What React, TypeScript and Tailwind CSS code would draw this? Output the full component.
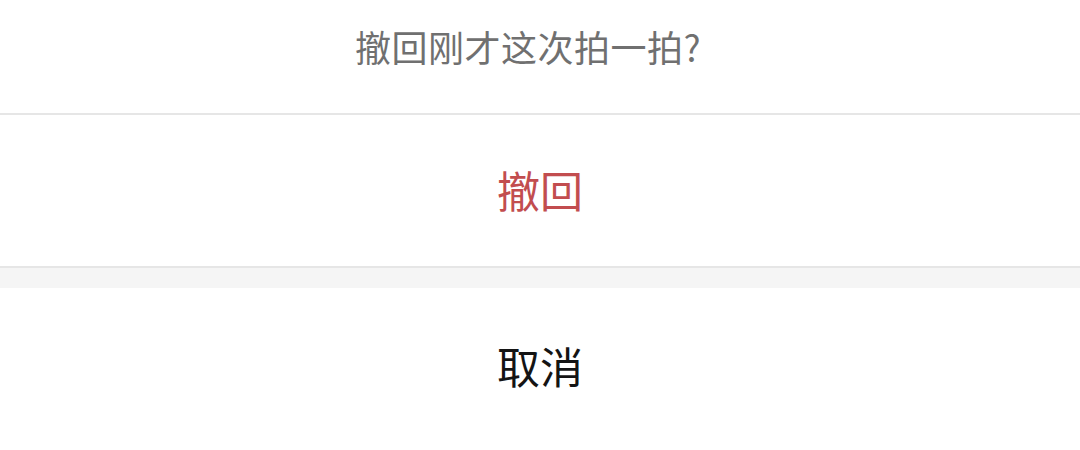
import React from 'react';

const font = { fontFamily: '"Noto Sans CJK SC", "Noto Sans", sans-serif' };

export default function App() {
    return (
        <div className="w-[1080px] h-[450px] bg-white overflow-hidden flex flex-col" style={font}>
            {/* title */}
            <div className="h-[115px] shrink-0 flex items-start justify-center pt-[20px] pr-[24px] border-b-2 border-[#e6e6e6]">
                <span className="text-[36px] leading-[52px] text-[#707070] tracking-[0.5px]">撤回刚才这次拍一拍?</span>
            </div>

            {/* undo action */}
            <button className="h-[151px] shrink-0 flex items-center justify-center pb-[2px]">
                <span className="text-[43px] leading-none text-[#c24d4f]">撤回</span>
            </button>

            {/* separator */}
            <div className="h-[22px] shrink-0 bg-[#f5f5f5] border-t-2 border-[#e6e6e6]" />

            {/* cancel */}
            <button className="flex-1 flex items-start justify-center pt-[56px]">
                <span className="text-[43px] leading-none text-[#141414]">取消</span>
            </button>
        </div>
    );
}
